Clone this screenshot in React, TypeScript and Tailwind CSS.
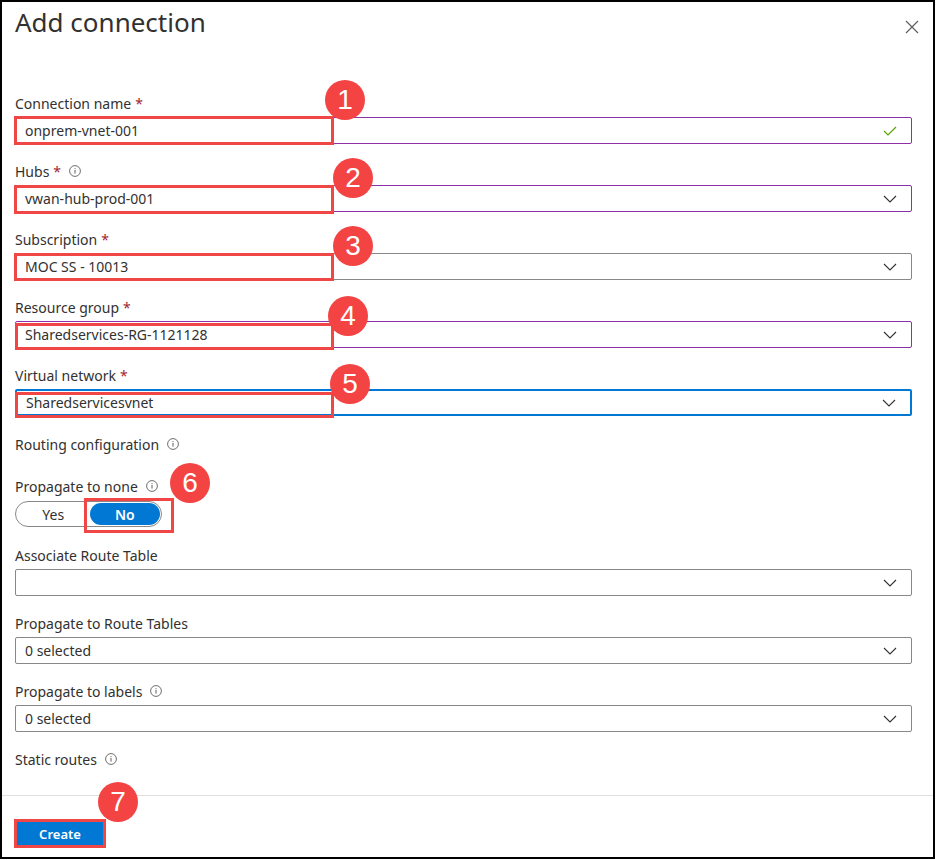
import React from "react";

const font = { fontFamily: '"Segoe UI", "Noto Sans", "Open Sans", sans-serif' };

function Info() {
  return (
    <svg width="12" height="12" viewBox="0 0 12 12" className="ml-[8px] inline-block">
      <circle cx="6" cy="6" r="5.4" fill="none" stroke="#605e5c" strokeWidth="0.9" />
      <rect x="5.5" y="5" width="1" height="3.6" fill="#605e5c" />
      <rect x="5.5" y="3.2" width="1" height="1" fill="#605e5c" />
    </svg>
  );
}

function Chevron() {
  return (
    <svg width="14" height="8" viewBox="0 0 14 8" className="shrink-0">
      <path d="M1 1 L7 7 L13 1" fill="none" stroke="#323130" strokeWidth="1.1" />
    </svg>
  );
}

// red numbered callout drawn over the form
function Badge({ n, className }: { n: number; className: string }) {
  return (
    <div
      className={`absolute w-[40px] h-[40px] rounded-full bg-[#f44343] text-white flex items-center justify-center text-[28px] leading-none ${className}`}
      style={{ fontFamily: '"Liberation Sans", Arial, sans-serif' }}
    >
      {n}
    </div>
  );
}

function Label({ text, required, info }: { text: string; required?: boolean; info?: boolean }) {
  return (
    <div className="flex items-center h-[18px] text-[14px] text-[#323130]">
      <span>{text}</span>
      {required && <span className="text-[#a4262c] ml-[4px]">*</span>}
      {info && <Info />}
    </div>
  );
}

interface FieldProps {
  label: string;
  value?: string;
  required?: boolean;
  info?: boolean;
  border?: string;
  check?: boolean;
  children?: React.ReactNode;
}

function Field({ label, value, required, info, border = "border border-[#8a8886]", check, children }: FieldProps) {
  return (
    <div className="flex flex-col gap-[5px]">
      <Label text={label} required={required} info={info} />
      <div className={`relative h-[27px] rounded-[2px] flex items-center pl-[9px] pr-[14px] bg-white ${border}`}>
        <span className="flex-1 text-[14px] text-[#323130]">{value}</span>
        {check ? (
          <svg width="14" height="10" viewBox="0 0 14 10">
            <path d="M1 5 L5 9 L13 1" fill="none" stroke="#57a300" strokeWidth="1.2" />
          </svg>
        ) : (
          <Chevron />
        )}
        {children}
      </div>
    </div>
  );
}

const redBox = "absolute border-[3px] border-[#f04646] pointer-events-none";

export default function App() {
  return (
    <div className="w-[935px] h-[859px] border-2 border-black bg-white flex flex-col" style={font}>
      {/* header */}
      <div className="flex items-start justify-between pl-[13px] pr-[14px] pt-[4px]">
        <h1 className="text-[26px] leading-[32px] text-[#323130]">Add connection</h1>
        <svg width="14" height="14" viewBox="0 0 14 14" className="mt-[14px]">
          <path d="M1 1 L13 13 M13 1 L1 13" stroke="#605e5c" strokeWidth="1.2" />
        </svg>
      </div>

      {/* form */}
      <div className="pl-[13px] pr-[21px] pt-[56px] flex-1 flex flex-col">
        <div className="flex flex-col gap-[18px]">
          <Field label="Connection name" required value="onprem-vnet-001" border="border border-[#8e30a8]" check>
            <div className={`${redBox} left-[-2px] top-[-2px] w-[320px] h-[29px]`} />
            <Badge n={1} className="left-[309px] top-[-38px]" />
          </Field>
          <Field label="Hubs" required info value="vwan-hub-prod-001" border="border border-[#8e30a8]">
            <div className={`${redBox} left-[-2px] top-[-1px] w-[320px] h-[29px]`} />
            <Badge n={2} className="left-[317px] top-[-28px]" />
          </Field>
          <Field label="Subscription" required value="MOC SS - 10013">
            <div className={`${redBox} left-[-2px] top-[-1px] w-[320px] h-[28px]`} />
            <Badge n={3} className="left-[317px] top-[-28px]" />
          </Field>
          <Field label="Resource group" required value="Sharedservices-RG-1121128" border="border border-[#8e30a8]">
            <div className={`${redBox} left-[-1px] top-[1px] w-[319px] h-[27px]`} />
            <Badge n={4} className="left-[312px] top-[-26px]" />
          </Field>
          <Field label="Virtual network" required value="Sharedservicesvnet" border="border-2 border-[#0078d4]">
            <div className={`${redBox} left-[-2px] top-[1px] w-[319px] h-[26px]`} />
            <Badge n={5} className="left-[313px] top-[-27px]" />
          </Field>
        </div>

        <div className="mt-[19px]">
          <Label text="Routing configuration" info />
        </div>

        <div className="mt-[24px] flex flex-col gap-[6px]">
          <Label text="Propagate to none" info />
          <div className="relative w-[147px] h-[26px] rounded-full border border-[#8a8886] flex items-center p-[1px]">
            <div className="w-[73px] text-center text-[14px] text-[#323130]">Yes</div>
            <div className="w-[71px] h-[22px] rounded-full bg-[#0078d4] text-white text-[14px] font-semibold flex items-center justify-center">
              No
            </div>
            <div className={`${redBox} left-[68px] top-[-4px] w-[90px] h-[35px]`} />
            <Badge n={6} className="left-[154px] top-[-39px]" />
          </div>
        </div>

        <div className="mt-[19px] flex flex-col gap-[18px]">
          <Field label="Associate Route Table" />
          <Field label="Propagate to Route Tables" value="0 selected" />
          <Field label="Propagate to labels" info value="0 selected" />
          <Label text="Static routes" info />
        </div>
      </div>

      {/* footer */}
      <div className="border-t border-[#e1dfdd] h-[62px] pl-[15px] pt-[25px]">
        <div className="relative w-[86px]">
          <button className="w-[86px] h-[25px] bg-[#0078d4] text-white text-[13px] font-semibold">Create</button>
          <div className={`${redBox} left-[-3px] top-[-2px] w-[92px] h-[29px]`} />
          <Badge n={7} className="left-[81px] top-[-39px]" />
        </div>
      </div>
    </div>
  );
}
